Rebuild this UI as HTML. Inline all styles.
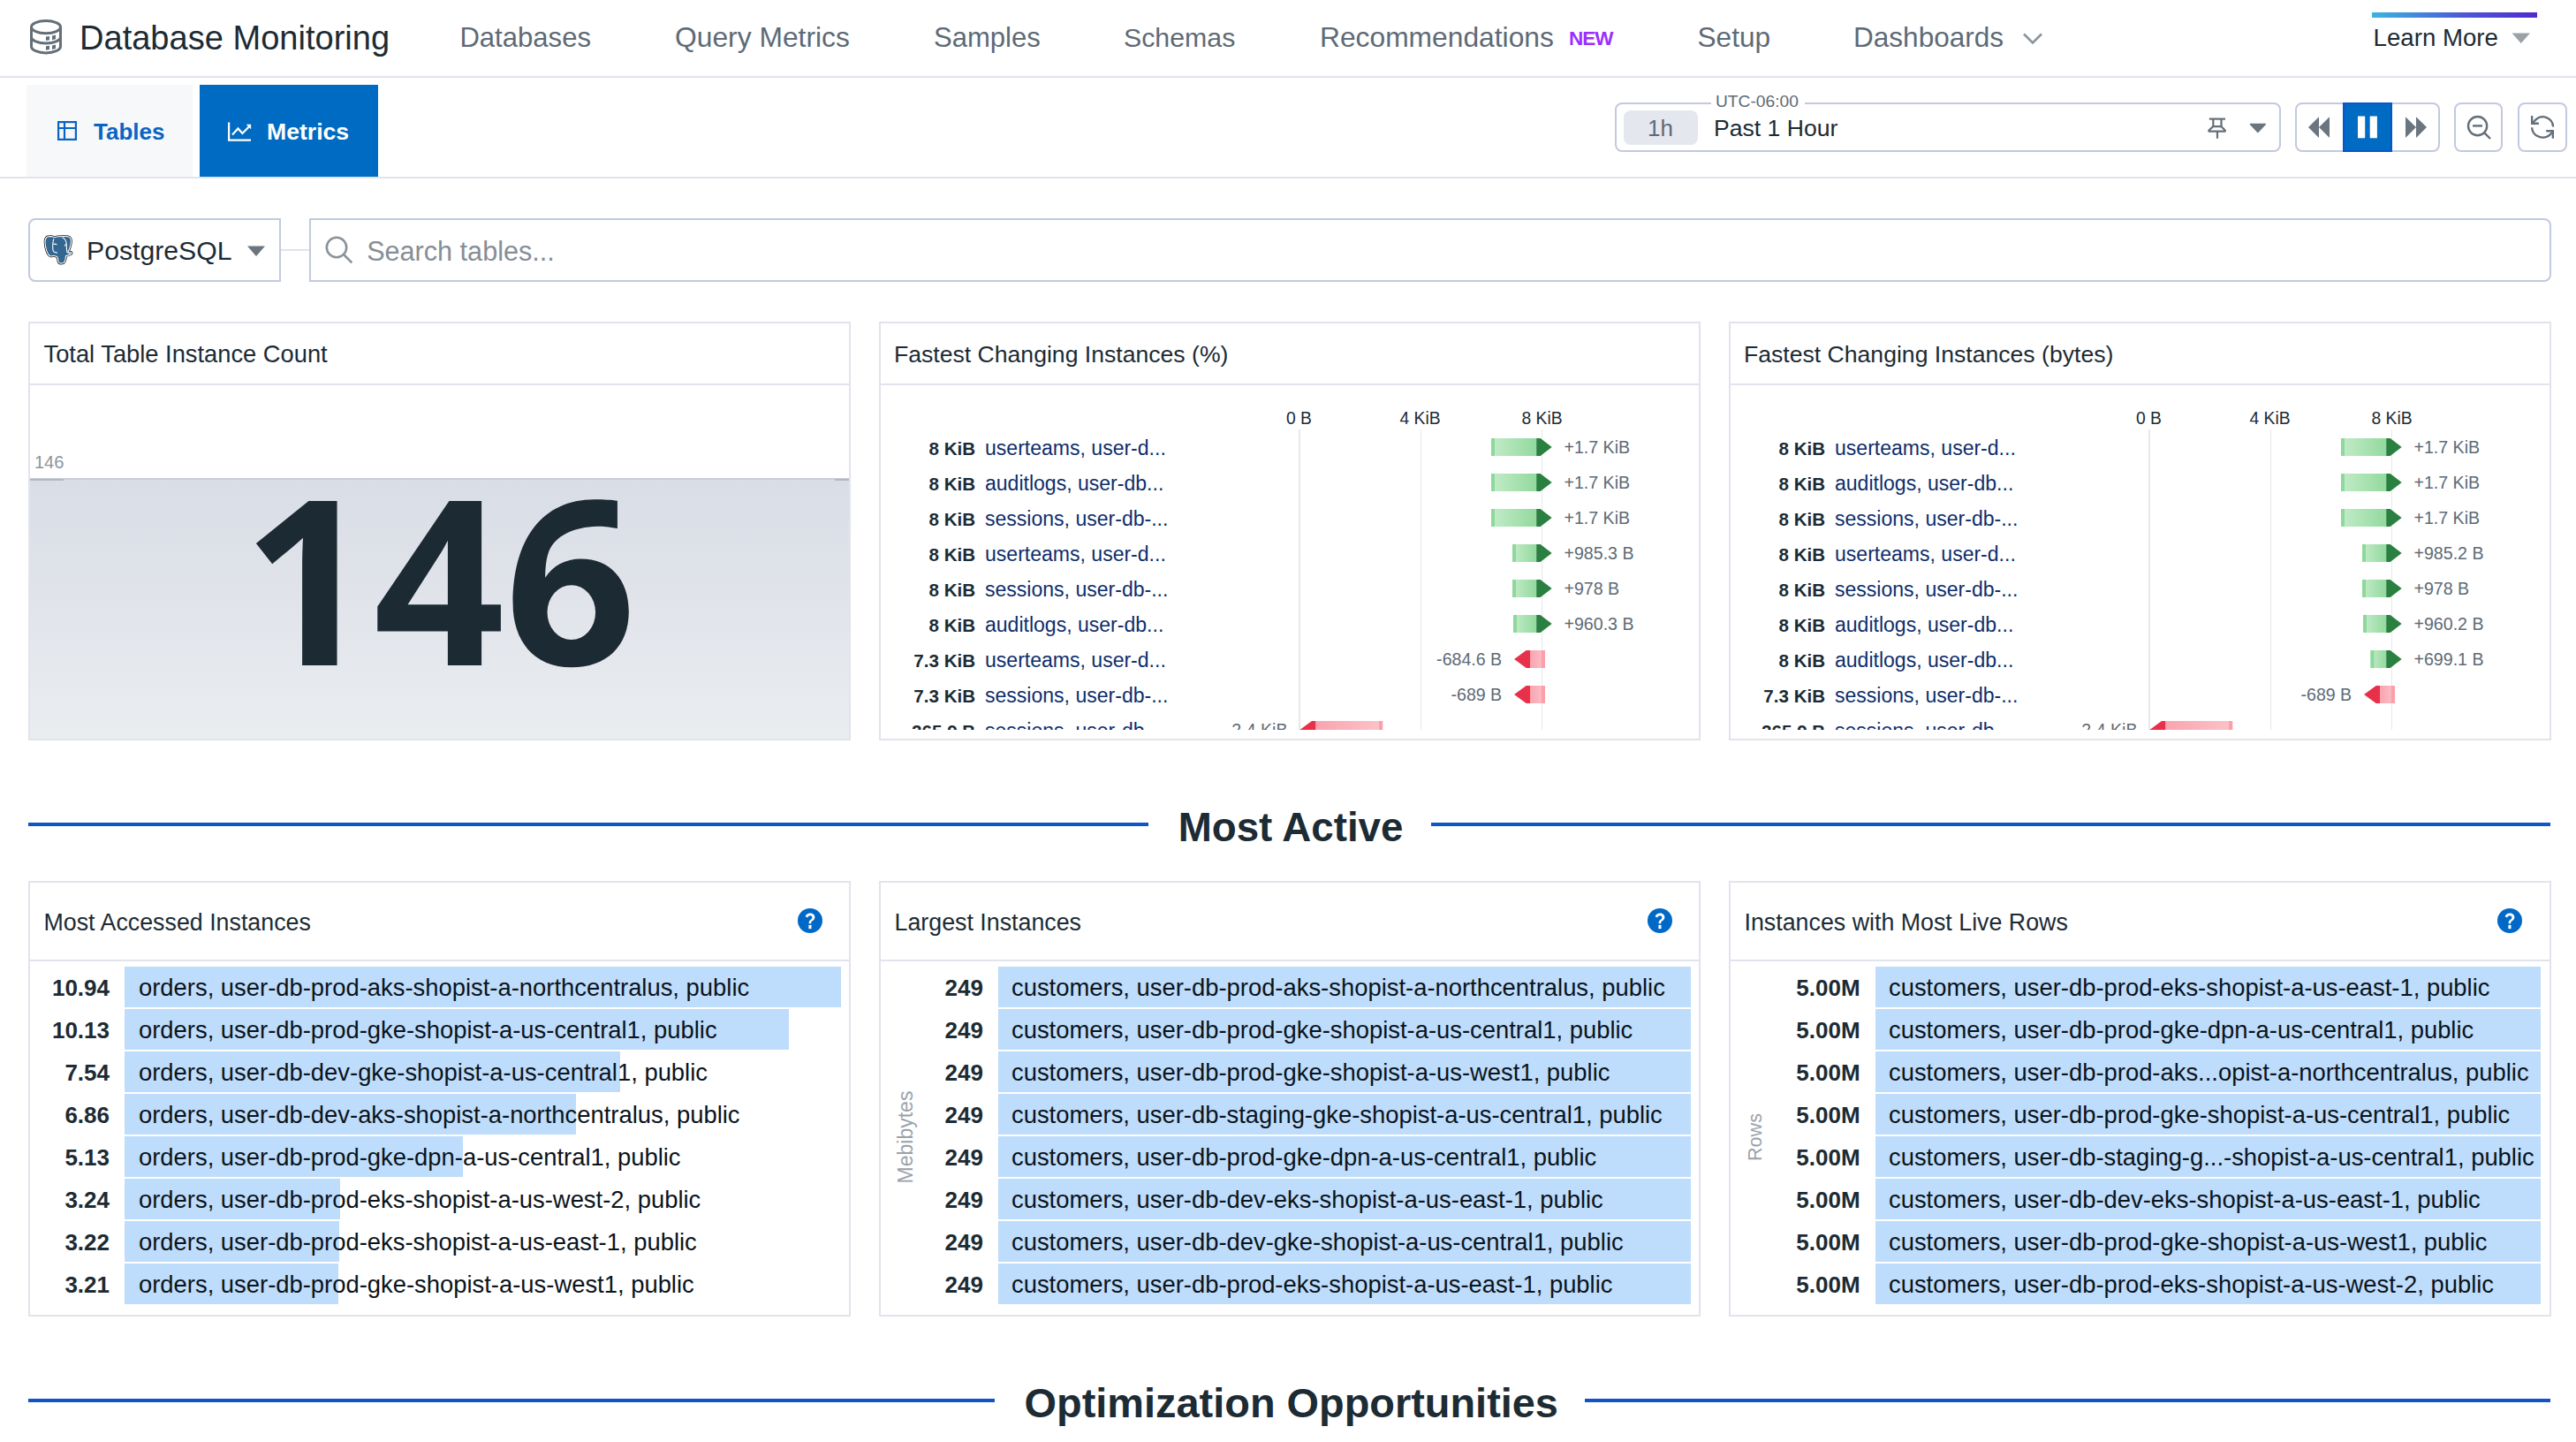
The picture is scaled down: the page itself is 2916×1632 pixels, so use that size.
<!DOCTYPE html>
<html><head><meta charset="utf-8"><title>Database Monitoring</title>
<style>
html,body{margin:0;padding:0;background:#fff;}
body{width:2916px;height:1632px;position:relative;overflow:hidden;font-family:"Liberation Sans",sans-serif;}
.t{position:absolute;line-height:1;white-space:nowrap;}
.r{position:absolute;}
</style></head><body>
<svg class="r" style="left:0;top:0" width="120" height="90" viewBox="0 0 120 90">
<g fill="none" stroke="#646f79" stroke-width="3">
<ellipse cx="52" cy="30.6" rx="16.5" ry="7.2"/>
<path d="M35.5 30.6V52.5A16.5 7.4 0 0 0 68.5 52.5V30.6"/>
<path d="M35.5 41.8A16.5 7.2 0 0 0 68.5 41.8"/>
</g>
<g fill="#646f79"><path d="M52 41.5l4-0.6v4.4l-4 0.6z"/><path d="M59 40.6l4-1v4.6l-4 1z"/>
<path d="M52 52.3l4-0.6v4.4l-4 0.6z"/><path d="M59 51.4l4-1v4.6l-4 1z"/></g>
</svg>
<div class="t" style="left:90.0px;top:24.0px;font-size:38.05px;color:#1c2b34;">Database Monitoring</div>
<div class="t" style="left:520.4px;top:27.0px;font-size:31.08px;color:#5e6a76;">Databases</div>
<div class="t" style="left:764.0px;top:27.0px;font-size:31.8px;color:#5e6a76;">Query Metrics</div>
<div class="t" style="left:1057.0px;top:27.0px;font-size:31.06px;color:#5e6a76;">Samples</div>
<div class="t" style="left:1272.0px;top:28.0px;font-size:30.3px;color:#5e6a76;">Schemas</div>
<div class="t" style="left:1494.0px;top:27.0px;font-size:31.77px;color:#5e6a76;">Recommendations</div>
<div class="t" style="left:1921.5px;top:27.0px;font-size:31.6px;color:#5e6a76;">Setup</div>
<div class="t" style="left:2098.0px;top:27.0px;font-size:31.55px;color:#5e6a76;">Dashboards</div>
<div class="t" style="left:1776.0px;top:33.0px;font-size:22.5px;font-weight:700;color:#9b30ff;letter-spacing:-1px">NEW</div>
<svg class="r" style="left:2286px;top:32px" width="30" height="22" viewBox="0 0 30 22"><path d="M5 6.5L15 16.5L25 6.5" fill="none" stroke="#8a949c" stroke-width="2.6"/></svg>
<div class="r" style="left:2685.3px;top:14.0px;width:186.7px;height:6.0px;background:linear-gradient(90deg,#3bb5df,#4c5ad6 55%,#5229cf)"></div>
<div class="t" style="left:2686.6px;top:29.0px;font-size:27.64px;color:#1c2b34;">Learn More</div>
<svg class="r" style="left:2843px;top:37px" width="22" height="13" viewBox="0 0 22 13"><path d="M0.5 0.5H21L10.75 12z" fill="#9aa1a7"/></svg>
<div class="r" style="left:0.0px;top:86.0px;width:2916.0px;height:2.0px;background:#e1e4ed"></div>
<div class="r" style="left:30.0px;top:96.0px;width:188.0px;height:104.0px;background:#f7f8fa"></div>
<div class="r" style="left:226.0px;top:96.0px;width:202.0px;height:104.0px;background:#006bc2"></div>
<svg class="r" style="left:60px;top:130px" width="32" height="34" viewBox="0 0 32 34">
<g fill="none" stroke="#0a64c2" stroke-width="2.2"><rect x="6.1" y="8.1" width="19.8" height="19.8"/><path d="M6 15H26M13 8V28"/></g></svg>
<div class="t" style="left:106.0px;top:136.0px;font-size:26px;font-weight:700;color:#0a64c2;">Tables</div>
<svg class="r" style="left:250px;top:130px" width="40" height="34" viewBox="0 0 40 34">
<g fill="none" stroke="#fff" stroke-width="2.2"><path d="M9.1 8.5V28.6H34"/><path d="M13 22.5L19.5 15.5L24.4 21L32 13.3"/></g>
<path d="M28.6 10.8H34.1V16.3z" fill="#fff"/></svg>
<div class="t" style="left:302.0px;top:136.0px;font-size:26.6px;font-weight:700;color:#fff;">Metrics</div>
<div class="r" style="left:0.0px;top:200.0px;width:2916.0px;height:2.0px;background:#e1e4ed"></div>
<div class="r" style="left:1828.0px;top:116.0px;width:753.5px;height:56.0px;border:2px solid #c3c9de;border-radius:8px;box-sizing:border-box"></div>
<div class="r" style="left:1937.0px;top:110.0px;width:106.0px;height:12.0px;background:#fff"></div>
<div class="t" style="left:1942.0px;top:105.0px;font-size:19.2px;color:#5e6a76;">UTC-06:00</div>
<div class="r" style="left:1838.0px;top:124.5px;width:84.0px;height:39.0px;background:#e4e7ee;border-radius:8px"></div>
<div class="t" style="left:1865.0px;top:132.3px;font-size:26px;color:#5e6a76;">1h</div>
<div class="t" style="left:1940.0px;top:132.3px;font-size:26.6px;color:#1c2b34;">Past 1 Hour</div>
<svg class="r" style="left:2496px;top:130px" width="28" height="30" viewBox="0 0 28 30">
<g fill="none" stroke="#646f79" stroke-width="2.2"><path d="M4.8 4.6H23"/><path d="M9.3 4.6V13.2M18.5 4.6V13.2"/><path d="M9.3 13.2H18.5L22.8 17.5V18.6H4.4V17.5Z" stroke-linejoin="round"/><path d="M14 18.6V26.8"/></g></svg>
<svg class="r" style="left:2545px;top:138px" width="22" height="14" viewBox="0 0 22 14"><path d="M2.3 2.4H19.4L10.85 11.5z" fill="#6b757e" stroke="#6b757e" stroke-width="1.4" stroke-linejoin="round"/></svg>
<div class="r" style="left:2598.0px;top:116.0px;width:163.5px;height:56.0px;border:2px solid #c3c9de;border-radius:8px;box-sizing:border-box"></div>
<div class="r" style="left:2652.0px;top:116.0px;width:56.0px;height:56.0px;background:#006bc2;border:2px solid #0a55c9;box-sizing:border-box"></div>
<svg class="r" style="left:2600px;top:120px" width="160" height="50" viewBox="2600 120 160 50">
<g fill="#6b757e"><path d="M2613 144.1L2625 132.2V156z"/><path d="M2625 144.1L2637 132.2V156z"/>
<path d="M2747 144.1L2735 132.2V156z"/><path d="M2735 144.1L2723 132.2V156z"/></g>
<g fill="#fff"><rect x="2669" y="131.5" width="8.2" height="24.8"/><rect x="2682.7" y="131.5" width="8.2" height="24.8"/></g>
</svg>
<div class="r" style="left:2778.4px;top:116.0px;width:54.8px;height:56.0px;border:2px solid #c3c9de;border-radius:8px;box-sizing:border-box"></div>
<svg class="r" style="left:2780px;top:120px" width="52" height="50" viewBox="2780 120 52 50">
<g fill="none" stroke="#646f79" stroke-width="2.4"><circle cx="2804.6" cy="142.6" r="10.6"/><path d="M2812.3 150.3L2819 157"/><path d="M2799 142.4H2810"/></g></svg>
<div class="r" style="left:2850.3px;top:116.0px;width:55.5px;height:56.0px;border:2px solid #c3c9de;border-radius:8px;box-sizing:border-box"></div>
<svg class="r" style="left:2852px;top:120px" width="52" height="50" viewBox="2852 120 52 50">
<g fill="none" stroke="#646f79" stroke-width="2.3"><path d="M2866.8,139.2L2870.2,135.6A11.7,11.7 0 0 1 2890.1,143.5"/><path d="M2866.1,144.2A12.3,11.7 0 0 0 2887,152.2L2889.8,148.8"/></g>
<g fill="#646f79"><path d="M2865,131H2867.3V138.5H2873.9V140.9H2865Z"/><path d="M2882.2,147H2891V156.8H2888.7V149.4H2882.2Z"/></g></svg>
<div class="r" style="left:32.4px;top:247.3px;width:285.2px;height:71.3px;border:2px solid #c3c9de;border-radius:8px 0 0 8px;box-sizing:border-box"></div>
<svg class="r" style="left:48px;top:264px" width="36" height="38" viewBox="0 0 36 38">

<path d="M9.7,3.5C7,3.6 5.5,3.8 5.2,4.1C3.5,5.5 2.8,8 3,10.5C3.3,14 3.8,17 4.4,18.8C5.2,21.5 6,23 7.2,24.4C8,25.5 9,26.1 9.7,26C10.5,25.9 11.2,25.6 11.9,25.5C13.5,25.7 15,26 16,26.3C16.8,26.8 17.3,27.2 17.4,28L18,32.1C18.5,33.5 19.5,34.1 20.7,34.1C22.2,34.1 23.5,33.8 24.1,33.5C25.2,32.5 25.8,31.2 26,29.9L26.6,25.5C27.8,25.2 28.9,24.9 29.9,24.6C31.2,24.2 32.3,23.6 33,23C33.2,22.3 32.9,21.5 32.4,21.3C31.3,21 30,21 29.1,21C29.6,20 30.1,19 30.5,18C31.5,15.5 32.2,13 32.4,10.5C32.6,9 32.5,7.5 32.1,6.3C31.5,5 30.5,4.2 29.3,3.8C27,3.3 25,3.4 23,3.5C21,3.6 19,3.7 17.4,3.8C16,3.9 14.8,4.2 13.5,4.4C12.2,3.9 11,3.5 9.7,3.5Z" fill="#000" stroke="#111" stroke-width="2.6"/>
<path d="M9.7,3.5C7,3.6 5.5,3.8 5.2,4.1C3.5,5.5 2.8,8 3,10.5C3.3,14 3.8,17 4.4,18.8C5.2,21.5 6,23 7.2,24.4C8,25.5 9,26.1 9.7,26C10.5,25.9 11.2,25.6 11.9,25.5C13.5,25.7 15,26 16,26.3C16.8,26.8 17.3,27.2 17.4,28L18,32.1C18.5,33.5 19.5,34.1 20.7,34.1C22.2,34.1 23.5,33.8 24.1,33.5C25.2,32.5 25.8,31.2 26,29.9L26.6,25.5C27.8,25.2 28.9,24.9 29.9,24.6C31.2,24.2 32.3,23.6 33,23C33.2,22.3 32.9,21.5 32.4,21.3C31.3,21 30,21 29.1,21C29.6,20 30.1,19 30.5,18C31.5,15.5 32.2,13 32.4,10.5C32.6,9 32.5,7.5 32.1,6.3C31.5,5 30.5,4.2 29.3,3.8C27,3.3 25,3.4 23,3.5C21,3.6 19,3.7 17.4,3.8C16,3.9 14.8,4.2 13.5,4.4C12.2,3.9 11,3.5 9.7,3.5Z" fill="#336791" stroke="#fff" stroke-width="1.1"/>
<g fill="none" stroke="#fff" stroke-width="1.1"><path d="M13,6.3C11.8,9 11.4,13 11.9,18.8C12.3,20.3 12.8,21 13.5,21.3C14.5,21.8 15.8,22 16.9,22.1"/><path d="M22.4,4.7C24,5.3 25.2,6.2 25.7,7.2C26.6,8.6 27,10 27.1,11.3C27.4,13.5 27.4,15.5 27.4,17.4C27.5,19 27.7,20.5 28,21.6C29,22.2 30.2,22.4 31.3,22.4"/><path d="M12.2,12.2C13.5,12 15,12 16.4,12.8"/><path d="M25.2,14.5C25.6,13.5 26.2,12.8 27,12.5"/></g></svg>
<div class="t" style="left:98.0px;top:268.7px;font-size:30.2px;color:#1c2b34;">PostgreSQL</div>
<svg class="r" style="left:279px;top:277px" width="23" height="15" viewBox="0 0 23 15"><path d="M1 1.4H21L11 13z" fill="#6b757e"/></svg>
<div class="r" style="left:317.6px;top:282.0px;width:32.7px;height:2.0px;background:#dfe3eb"></div>
<div class="r" style="left:350.3px;top:247.3px;width:2537.5px;height:71.3px;border:2px solid #c3c9de;border-radius:0 8px 8px 0;box-sizing:border-box"></div>
<svg class="r" style="left:364px;top:264px" width="40" height="40" viewBox="0 0 40 40">
<g fill="none" stroke="#8a939b" stroke-width="2.6"><circle cx="17" cy="16" r="11.2"/><path d="M25 24L34.3 33.3"/></g></svg>
<div class="t" style="left:415.2px;top:268.8px;font-size:30.6px;color:#868e96;">Search tables...</div>
<div class="r" style="left:32.0px;top:364.0px;width:931.0px;height:474.0px;border:2px solid #e1e4ec;box-sizing:border-box;background:#fff"></div>
<div class="r" style="left:32.0px;top:433.5px;width:931.0px;height:2.0px;background:#e1e4ec"></div>
<div class="t" style="left:49.5px;top:386.8px;font-size:27.3px;color:#1c2b34;">Total Table Instance Count</div>
<div class="t" style="left:38.9px;top:512.7px;font-size:20.1px;color:#8d959c;">146</div>
<div class="r" style="left:34.0px;top:540.5px;width:927.0px;height:295.5px;background:linear-gradient(180deg,#d9dde6 0%,#e1e4ea 50%,#eaedf0 100%)"></div>
<div class="r" style="left:34.0px;top:540.5px;width:927.0px;height:2.5px;background:#c9ced8"></div>
<div class="r" style="left:34.0px;top:541.5px;width:38.0px;height:2.5px;background:#b3b8c3"></div>
<div class="r" style="left:945.0px;top:541.5px;width:16.0px;height:2.5px;background:#b3b8c3"></div>
<svg class="r" style="left:0;top:0" width="963" height="838" viewBox="0 0 963 838"><g fill="#1c2a33" fill-rule="evenodd">
<path d="M349.4,567.1H381.5V753H342.1V641.6C342.1,630 342.5,618 343,608.8C335,616 326,624 318,630L308.2,638.2L289.9,614.9Z"/>
<path d="M508.4,567.1H545.1V684.3H566.9V714.4H545.1V753H506.9V714.4H427.3V686.6ZM506.9,611.8C504.5,616 502.5,620.5 499.7,624.8L461.6,684.3H506.9Z"/>
<path d="M698.9,566.8L698.9,598.1C688,596.5 684,595.8 676,595.8C650,596.5 628,606 621,625C618,633 617.2,645 617.2,653.8C626,640 640,632.4 657.7,632.4C690,632.4 711.8,655 711.8,692C711.8,732 686,755.3 647,755.3C604,755.3 580.6,725 580.6,683C580.6,610 614,565.3 672.9,565.3C684,565.3 692,565.8 698.9,566.8ZM619.5,693.1A27.3,30.9 0 1 0 674.1,693.1A27.3,30.9 0 1 0 619.5,693.1Z"/>
</g></svg>
<div class="r" style="left:995.0px;top:364.0px;width:930.0px;height:474.0px;border:2px solid #e1e4ec;box-sizing:border-box;background:#fff"></div>
<div class="r" style="left:995.0px;top:433.5px;width:930.0px;height:2.0px;background:#e1e4ec"></div>
<div class="t" style="left:1012.0px;top:387.8px;font-size:26.6px;color:#1c2b34;">Fastest Changing Instances (%)</div>
<div class="r" style="left:997px;top:436px;width:927px;height:390px;overflow:hidden">
<div class="t" style="left:459.0px;top:27.7px;font-size:19.3px;color:#1c2b34;">0 B</div>
<div class="t" style="left:587.5px;top:27.7px;font-size:19.3px;color:#1c2b34;">4 KiB</div>
<div class="t" style="left:725.5px;top:27.7px;font-size:19.3px;color:#1c2b34;">8 KiB</div>
<div class="r" style="left:473.2px;top:50.0px;width:1.6px;height:850.0px;background:#e6e8ec"></div>
<div class="r" style="left:610.6px;top:50.0px;width:1.6px;height:850.0px;background:#e6e8ec"></div>
<div class="r" style="left:747.8px;top:50.0px;width:1.6px;height:850.0px;background:#e6e8ec"></div>
<div class="t" style="left:0;width:107.2px;text-align:right;top:61.8px;font-size:20.6px;font-weight:700;color:#1c2b34">8 KiB</div>
<div class="t" style="left:118.0px;top:59.8px;font-size:23.04px;color:#0e2e6b;">userteams, user-d...</div>
<div class="t" style="left:773.5px;top:61.0px;font-size:19.6px;color:#5e6a76;">+1.7 KiB</div>
<div class="t" style="left:0;width:107.2px;text-align:right;top:101.8px;font-size:20.6px;font-weight:700;color:#1c2b34">8 KiB</div>
<div class="t" style="left:118.0px;top:99.8px;font-size:23.04px;color:#0e2e6b;">auditlogs, user-db...</div>
<div class="t" style="left:773.5px;top:101.0px;font-size:19.6px;color:#5e6a76;">+1.7 KiB</div>
<div class="t" style="left:0;width:107.2px;text-align:right;top:141.8px;font-size:20.6px;font-weight:700;color:#1c2b34">8 KiB</div>
<div class="t" style="left:118.0px;top:139.8px;font-size:23.04px;color:#0e2e6b;">sessions, user-db-...</div>
<div class="t" style="left:773.5px;top:141.0px;font-size:19.6px;color:#5e6a76;">+1.7 KiB</div>
<div class="t" style="left:0;width:107.2px;text-align:right;top:181.8px;font-size:20.6px;font-weight:700;color:#1c2b34">8 KiB</div>
<div class="t" style="left:118.0px;top:179.8px;font-size:23.04px;color:#0e2e6b;">userteams, user-d...</div>
<div class="t" style="left:773.5px;top:181.0px;font-size:19.6px;color:#5e6a76;">+985.3 B</div>
<div class="t" style="left:0;width:107.2px;text-align:right;top:221.8px;font-size:20.6px;font-weight:700;color:#1c2b34">8 KiB</div>
<div class="t" style="left:118.0px;top:219.8px;font-size:23.04px;color:#0e2e6b;">sessions, user-db-...</div>
<div class="t" style="left:773.5px;top:221.0px;font-size:19.6px;color:#5e6a76;">+978 B</div>
<div class="t" style="left:0;width:107.2px;text-align:right;top:261.8px;font-size:20.6px;font-weight:700;color:#1c2b34">8 KiB</div>
<div class="t" style="left:118.0px;top:259.8px;font-size:23.04px;color:#0e2e6b;">auditlogs, user-db...</div>
<div class="t" style="left:773.5px;top:261.0px;font-size:19.6px;color:#5e6a76;">+960.3 B</div>
<div class="t" style="left:0;width:107.2px;text-align:right;top:301.8px;font-size:20.6px;font-weight:700;color:#1c2b34">7.3 KiB</div>
<div class="t" style="left:118.0px;top:299.8px;font-size:23.04px;color:#0e2e6b;">userteams, user-d...</div>
<div class="t" style="left:0;width:703.2px;text-align:right;top:301.0px;font-size:19.6px;color:#5e6a76">-684.6 B</div>
<div class="t" style="left:0;width:107.2px;text-align:right;top:341.8px;font-size:20.6px;font-weight:700;color:#1c2b34">7.3 KiB</div>
<div class="t" style="left:118.0px;top:339.8px;font-size:23.04px;color:#0e2e6b;">sessions, user-db-...</div>
<div class="t" style="left:0;width:703.2px;text-align:right;top:341.0px;font-size:19.6px;color:#5e6a76">-689 B</div>
<div class="t" style="left:0;width:107.2px;text-align:right;top:381.8px;font-size:20.6px;font-weight:700;color:#1c2b34">265.9 B</div>
<div class="t" style="left:118.0px;top:379.8px;font-size:23.04px;color:#0e2e6b;">sessions, user-db...</div>
<div class="t" style="left:0;width:460.5px;text-align:right;top:381.0px;font-size:19.6px;color:#5e6a76">-2.4 KiB</div>
<svg class="r" style="left:0;top:0" width="927" height="390" viewBox="997 436 927 390">
<defs><linearGradient id="gg" x1="0" x2="1"><stop offset="0" stop-color="#c3ecc9"/><stop offset="1" stop-color="#93d99e"/></linearGradient>
<linearGradient id="rg" x1="0" x2="1"><stop offset="0" stop-color="#f9a4af"/><stop offset="1" stop-color="#fbc3ca"/></linearGradient></defs>
<rect x="1688" y="496" width="51.200000000000045" height="20" fill="url(#gg)"/>
<rect x="1688" y="496" width="4" height="20" fill="#8fd89c"/>
<path d="M1739.2 496H1743.7L1756.7 506L1743.7 516H1739.2z" fill="#2a8040"/>
<rect x="1688" y="536" width="51.200000000000045" height="20" fill="url(#gg)"/>
<rect x="1688" y="536" width="4" height="20" fill="#8fd89c"/>
<path d="M1739.2 536H1743.7L1756.7 546L1743.7 556H1739.2z" fill="#2a8040"/>
<rect x="1688" y="576" width="51.200000000000045" height="20" fill="url(#gg)"/>
<rect x="1688" y="576" width="4" height="20" fill="#8fd89c"/>
<path d="M1739.2 576H1743.7L1756.7 586L1743.7 596H1739.2z" fill="#2a8040"/>
<rect x="1712" y="616" width="27.200000000000045" height="20" fill="url(#gg)"/>
<rect x="1712" y="616" width="4" height="20" fill="#8fd89c"/>
<path d="M1739.2 616H1743.7L1756.7 626L1743.7 636H1739.2z" fill="#2a8040"/>
<rect x="1712" y="656" width="27.200000000000045" height="20" fill="url(#gg)"/>
<rect x="1712" y="656" width="4" height="20" fill="#8fd89c"/>
<path d="M1739.2 656H1743.7L1756.7 666L1743.7 676H1739.2z" fill="#2a8040"/>
<rect x="1713" y="696" width="26.200000000000045" height="20" fill="url(#gg)"/>
<rect x="1713" y="696" width="4" height="20" fill="#8fd89c"/>
<path d="M1739.2 696H1743.7L1756.7 706L1743.7 716H1739.2z" fill="#2a8040"/>
<rect x="1732" y="736" width="17" height="20" fill="url(#rg)"/>
<rect x="1744.8" y="736" width="4.2" height="20" fill="#fb9fab"/>
<path d="M1714 746L1727.7 736H1732V756H1727.7z" fill="#e8304a"/>
<rect x="1732" y="776" width="17" height="20" fill="url(#rg)"/>
<rect x="1744.8" y="776" width="4.2" height="20" fill="#fb9fab"/>
<path d="M1714 786L1727.7 776H1732V796H1727.7z" fill="#e8304a"/>
<rect x="1489.3" y="816" width="75.90000000000009" height="20" fill="url(#rg)"/>
<rect x="1561.0" y="816" width="4.2" height="20" fill="#fb9fab"/>
<path d="M1471.3 826L1485.0 816H1489.3V836H1485.0z" fill="#e8304a"/>
</svg>
</div>
<div class="r" style="left:1957.0px;top:364.0px;width:931.0px;height:474.0px;border:2px solid #e1e4ec;box-sizing:border-box;background:#fff"></div>
<div class="r" style="left:1957.0px;top:433.5px;width:931.0px;height:2.0px;background:#e1e4ec"></div>
<div class="t" style="left:1974.0px;top:387.8px;font-size:26.6px;color:#1c2b34;">Fastest Changing Instances (bytes)</div>
<div class="r" style="left:1959px;top:436px;width:927px;height:390px;overflow:hidden">
<div class="t" style="left:459.0px;top:27.7px;font-size:19.3px;color:#1c2b34;">0 B</div>
<div class="t" style="left:587.5px;top:27.7px;font-size:19.3px;color:#1c2b34;">4 KiB</div>
<div class="t" style="left:725.5px;top:27.7px;font-size:19.3px;color:#1c2b34;">8 KiB</div>
<div class="r" style="left:473.2px;top:50.0px;width:1.6px;height:850.0px;background:#e6e8ec"></div>
<div class="r" style="left:610.6px;top:50.0px;width:1.6px;height:850.0px;background:#e6e8ec"></div>
<div class="r" style="left:747.8px;top:50.0px;width:1.6px;height:850.0px;background:#e6e8ec"></div>
<div class="t" style="left:0;width:107.2px;text-align:right;top:61.8px;font-size:20.6px;font-weight:700;color:#1c2b34">8 KiB</div>
<div class="t" style="left:118.0px;top:59.8px;font-size:23.04px;color:#0e2e6b;">userteams, user-d...</div>
<div class="t" style="left:773.5px;top:61.0px;font-size:19.6px;color:#5e6a76;">+1.7 KiB</div>
<div class="t" style="left:0;width:107.2px;text-align:right;top:101.8px;font-size:20.6px;font-weight:700;color:#1c2b34">8 KiB</div>
<div class="t" style="left:118.0px;top:99.8px;font-size:23.04px;color:#0e2e6b;">auditlogs, user-db...</div>
<div class="t" style="left:773.5px;top:101.0px;font-size:19.6px;color:#5e6a76;">+1.7 KiB</div>
<div class="t" style="left:0;width:107.2px;text-align:right;top:141.8px;font-size:20.6px;font-weight:700;color:#1c2b34">8 KiB</div>
<div class="t" style="left:118.0px;top:139.8px;font-size:23.04px;color:#0e2e6b;">sessions, user-db-...</div>
<div class="t" style="left:773.5px;top:141.0px;font-size:19.6px;color:#5e6a76;">+1.7 KiB</div>
<div class="t" style="left:0;width:107.2px;text-align:right;top:181.8px;font-size:20.6px;font-weight:700;color:#1c2b34">8 KiB</div>
<div class="t" style="left:118.0px;top:179.8px;font-size:23.04px;color:#0e2e6b;">userteams, user-d...</div>
<div class="t" style="left:773.5px;top:181.0px;font-size:19.6px;color:#5e6a76;">+985.2 B</div>
<div class="t" style="left:0;width:107.2px;text-align:right;top:221.8px;font-size:20.6px;font-weight:700;color:#1c2b34">8 KiB</div>
<div class="t" style="left:118.0px;top:219.8px;font-size:23.04px;color:#0e2e6b;">sessions, user-db-...</div>
<div class="t" style="left:773.5px;top:221.0px;font-size:19.6px;color:#5e6a76;">+978 B</div>
<div class="t" style="left:0;width:107.2px;text-align:right;top:261.8px;font-size:20.6px;font-weight:700;color:#1c2b34">8 KiB</div>
<div class="t" style="left:118.0px;top:259.8px;font-size:23.04px;color:#0e2e6b;">auditlogs, user-db...</div>
<div class="t" style="left:773.5px;top:261.0px;font-size:19.6px;color:#5e6a76;">+960.2 B</div>
<div class="t" style="left:0;width:107.2px;text-align:right;top:301.8px;font-size:20.6px;font-weight:700;color:#1c2b34">8 KiB</div>
<div class="t" style="left:118.0px;top:299.8px;font-size:23.04px;color:#0e2e6b;">auditlogs, user-db...</div>
<div class="t" style="left:773.5px;top:301.0px;font-size:19.6px;color:#5e6a76;">+699.1 B</div>
<div class="t" style="left:0;width:107.2px;text-align:right;top:341.8px;font-size:20.6px;font-weight:700;color:#1c2b34">7.3 KiB</div>
<div class="t" style="left:118.0px;top:339.8px;font-size:23.04px;color:#0e2e6b;">sessions, user-db-...</div>
<div class="t" style="left:0;width:703.2px;text-align:right;top:341.0px;font-size:19.6px;color:#5e6a76">-689 B</div>
<div class="t" style="left:0;width:107.2px;text-align:right;top:381.8px;font-size:20.6px;font-weight:700;color:#1c2b34">265.9 B</div>
<div class="t" style="left:118.0px;top:379.8px;font-size:23.04px;color:#0e2e6b;">sessions, user-db...</div>
<div class="t" style="left:0;width:460.5px;text-align:right;top:381.0px;font-size:19.6px;color:#5e6a76">-2.4 KiB</div>
<svg class="r" style="left:0;top:0" width="927" height="390" viewBox="1959 436 927 390">
<defs><linearGradient id="gg" x1="0" x2="1"><stop offset="0" stop-color="#c3ecc9"/><stop offset="1" stop-color="#93d99e"/></linearGradient>
<linearGradient id="rg" x1="0" x2="1"><stop offset="0" stop-color="#f9a4af"/><stop offset="1" stop-color="#fbc3ca"/></linearGradient></defs>
<rect x="2650" y="496" width="51.19999999999982" height="20" fill="url(#gg)"/>
<rect x="2650" y="496" width="4" height="20" fill="#8fd89c"/>
<path d="M2701.2 496H2705.7L2718.7 506L2705.7 516H2701.2z" fill="#2a8040"/>
<rect x="2650" y="536" width="51.19999999999982" height="20" fill="url(#gg)"/>
<rect x="2650" y="536" width="4" height="20" fill="#8fd89c"/>
<path d="M2701.2 536H2705.7L2718.7 546L2705.7 556H2701.2z" fill="#2a8040"/>
<rect x="2650" y="576" width="51.19999999999982" height="20" fill="url(#gg)"/>
<rect x="2650" y="576" width="4" height="20" fill="#8fd89c"/>
<path d="M2701.2 576H2705.7L2718.7 586L2705.7 596H2701.2z" fill="#2a8040"/>
<rect x="2674" y="616" width="27.199999999999818" height="20" fill="url(#gg)"/>
<rect x="2674" y="616" width="4" height="20" fill="#8fd89c"/>
<path d="M2701.2 616H2705.7L2718.7 626L2705.7 636H2701.2z" fill="#2a8040"/>
<rect x="2674" y="656" width="27.199999999999818" height="20" fill="url(#gg)"/>
<rect x="2674" y="656" width="4" height="20" fill="#8fd89c"/>
<path d="M2701.2 656H2705.7L2718.7 666L2705.7 676H2701.2z" fill="#2a8040"/>
<rect x="2675" y="696" width="26.199999999999818" height="20" fill="url(#gg)"/>
<rect x="2675" y="696" width="4" height="20" fill="#8fd89c"/>
<path d="M2701.2 696H2705.7L2718.7 706L2705.7 716H2701.2z" fill="#2a8040"/>
<rect x="2683.4" y="736" width="17.799999999999727" height="20" fill="url(#gg)"/>
<rect x="2683.4" y="736" width="4" height="20" fill="#8fd89c"/>
<path d="M2701.2 736H2705.7L2718.7 746L2705.7 756H2701.2z" fill="#2a8040"/>
<rect x="2694" y="776" width="17" height="20" fill="url(#rg)"/>
<rect x="2706.8" y="776" width="4.2" height="20" fill="#fb9fab"/>
<path d="M2676 786L2689.7 776H2694V796H2689.7z" fill="#e8304a"/>
<rect x="2451.3" y="816" width="75.89999999999964" height="20" fill="url(#rg)"/>
<rect x="2523.0" y="816" width="4.2" height="20" fill="#fb9fab"/>
<path d="M2433.3 826L2447.0 816H2451.3V836H2447.0z" fill="#e8304a"/>
</svg>
</div>
<div class="r" style="left:32.0px;top:931.0px;width:1267.7px;height:4.0px;background:#0f55c5"></div>
<div class="r" style="left:1619.8px;top:931.0px;width:1267.7px;height:4.0px;background:#0f55c5"></div>
<div class="t" style="left:1333.7px;top:914.0px;font-size:45.7px;font-weight:700;color:#1c2b34;">Most Active</div>
<div class="r" style="left:32.0px;top:1583.0px;width:1093.6px;height:4.0px;background:#0f55c5"></div>
<div class="r" style="left:1794.3px;top:1583.0px;width:1093.2px;height:4.0px;background:#0f55c5"></div>
<div class="t" style="left:1159.6px;top:1564.7px;font-size:46.9px;font-weight:700;color:#1c2b34;">Optimization Opportunities</div>
<div class="r" style="left:32.0px;top:997.0px;width:931.0px;height:493.0px;border:2px solid #e1e4ec;box-sizing:border-box;background:#fff"></div>
<div class="r" style="left:32.0px;top:1086.0px;width:931.0px;height:2.0px;background:#e1e4ec"></div>
<div class="t" style="left:49.5px;top:1030.5px;font-size:26.8px;color:#1c2b34;">Most Accessed Instances</div>
<svg class="r" style="left:901px;top:1026px" width="32" height="32" viewBox="0 0 32 32"><circle cx="16" cy="16" r="14" fill="#0068c6"/><path d="M10.6 11.3C11.6 8.8 13.6 7.6 16 7.6C19 7.6 21.4 9.5 21.4 12.2C21.4 14.6 19.4 15.6 18.2 16.6C17.4 17.3 17.2 17.9 17.2 19.2H14.6C14.6 17.3 15 16.3 16.4 15.1C17.6 14.1 18.4 13.6 18.4 12.4C18.4 11.1 17.4 10.3 16 10.3C14.8 10.3 13.9 11 13.2 12.5Z" fill="#fff"/><rect x="14.4" y="20.9" width="3.1" height="4.3" fill="#fff"/></svg>
<div class="r" style="left:141.0px;top:1094.0px;width:811.0px;height:46.0px;background:#bedcfb"></div>
<div class="t" style="left:32px;width:92.0px;text-align:right;top:1105.2px;font-size:26px;font-weight:700;color:#1c2b34">10.94</div>
<div class="t" style="left:157.0px;top:1104.2px;font-size:27.4px;color:#0b141b;white-space:nowrap">orders, user-db-prod-aks-shopist-a-northcentralus, public</div>
<div class="r" style="left:141.0px;top:1142.0px;width:752.0px;height:46.0px;background:#bedcfb"></div>
<div class="t" style="left:32px;width:92.0px;text-align:right;top:1153.2px;font-size:26px;font-weight:700;color:#1c2b34">10.13</div>
<div class="t" style="left:157.0px;top:1152.2px;font-size:27.4px;color:#0b141b;white-space:nowrap">orders, user-db-prod-gke-shopist-a-us-central1, public</div>
<div class="r" style="left:141.0px;top:1190.0px;width:561.0px;height:46.0px;background:#bedcfb"></div>
<div class="t" style="left:32px;width:92.0px;text-align:right;top:1201.2px;font-size:26px;font-weight:700;color:#1c2b34">7.54</div>
<div class="t" style="left:157.0px;top:1200.2px;font-size:27.4px;color:#0b141b;white-space:nowrap">orders, user-db-dev-gke-shopist-a-us-central1, public</div>
<div class="r" style="left:141.0px;top:1238.0px;width:511.0px;height:46.0px;background:#bedcfb"></div>
<div class="t" style="left:32px;width:92.0px;text-align:right;top:1249.2px;font-size:26px;font-weight:700;color:#1c2b34">6.86</div>
<div class="t" style="left:157.0px;top:1248.2px;font-size:27.4px;color:#0b141b;white-space:nowrap">orders, user-db-dev-aks-shopist-a-northcentralus, public</div>
<div class="r" style="left:141.0px;top:1286.0px;width:383.0px;height:46.0px;background:#bedcfb"></div>
<div class="t" style="left:32px;width:92.0px;text-align:right;top:1297.2px;font-size:26px;font-weight:700;color:#1c2b34">5.13</div>
<div class="t" style="left:157.0px;top:1296.2px;font-size:27.4px;color:#0b141b;white-space:nowrap">orders, user-db-prod-gke-dpn-a-us-central1, public</div>
<div class="r" style="left:141.0px;top:1334.0px;width:244.0px;height:46.0px;background:#bedcfb"></div>
<div class="t" style="left:32px;width:92.0px;text-align:right;top:1345.2px;font-size:26px;font-weight:700;color:#1c2b34">3.24</div>
<div class="t" style="left:157.0px;top:1344.2px;font-size:27.4px;color:#0b141b;white-space:nowrap">orders, user-db-prod-eks-shopist-a-us-west-2, public</div>
<div class="r" style="left:141.0px;top:1382.0px;width:242.5px;height:46.0px;background:#bedcfb"></div>
<div class="t" style="left:32px;width:92.0px;text-align:right;top:1393.2px;font-size:26px;font-weight:700;color:#1c2b34">3.22</div>
<div class="t" style="left:157.0px;top:1392.2px;font-size:27.4px;color:#0b141b;white-space:nowrap">orders, user-db-prod-eks-shopist-a-us-east-1, public</div>
<div class="r" style="left:141.0px;top:1430.0px;width:241.8px;height:46.0px;background:#bedcfb"></div>
<div class="t" style="left:32px;width:92.0px;text-align:right;top:1441.2px;font-size:26px;font-weight:700;color:#1c2b34">3.21</div>
<div class="t" style="left:157.0px;top:1440.2px;font-size:27.4px;color:#0b141b;white-space:nowrap">orders, user-db-prod-gke-shopist-a-us-west1, public</div>
<div class="r" style="left:995.0px;top:997.0px;width:930.0px;height:493.0px;border:2px solid #e1e4ec;box-sizing:border-box;background:#fff"></div>
<div class="r" style="left:995.0px;top:1086.0px;width:930.0px;height:2.0px;background:#e1e4ec"></div>
<div class="t" style="left:1012.5px;top:1030.5px;font-size:26.8px;color:#1c2b34;">Largest Instances</div>
<svg class="r" style="left:1863px;top:1026px" width="32" height="32" viewBox="0 0 32 32"><circle cx="16" cy="16" r="14" fill="#0068c6"/><path d="M10.6 11.3C11.6 8.8 13.6 7.6 16 7.6C19 7.6 21.4 9.5 21.4 12.2C21.4 14.6 19.4 15.6 18.2 16.6C17.4 17.3 17.2 17.9 17.2 19.2H14.6C14.6 17.3 15 16.3 16.4 15.1C17.6 14.1 18.4 13.6 18.4 12.4C18.4 11.1 17.4 10.3 16 10.3C14.8 10.3 13.9 11 13.2 12.5Z" fill="#fff"/><rect x="14.4" y="20.9" width="3.1" height="4.3" fill="#fff"/></svg>
<div class="r" style="left:1130.0px;top:1094.0px;width:784.3px;height:46.0px;background:#bedcfb"></div>
<div class="t" style="left:995px;width:118.0px;text-align:right;top:1105.2px;font-size:26px;font-weight:700;color:#1c2b34">249</div>
<div class="t" style="left:1145.0px;top:1104.2px;font-size:27.4px;color:#0b141b;white-space:nowrap">customers, user-db-prod-aks-shopist-a-northcentralus, public</div>
<div class="r" style="left:1130.0px;top:1142.0px;width:784.3px;height:46.0px;background:#bedcfb"></div>
<div class="t" style="left:995px;width:118.0px;text-align:right;top:1153.2px;font-size:26px;font-weight:700;color:#1c2b34">249</div>
<div class="t" style="left:1145.0px;top:1152.2px;font-size:27.4px;color:#0b141b;white-space:nowrap">customers, user-db-prod-gke-shopist-a-us-central1, public</div>
<div class="r" style="left:1130.0px;top:1190.0px;width:784.3px;height:46.0px;background:#bedcfb"></div>
<div class="t" style="left:995px;width:118.0px;text-align:right;top:1201.2px;font-size:26px;font-weight:700;color:#1c2b34">249</div>
<div class="t" style="left:1145.0px;top:1200.2px;font-size:27.4px;color:#0b141b;white-space:nowrap">customers, user-db-prod-gke-shopist-a-us-west1, public</div>
<div class="r" style="left:1130.0px;top:1238.0px;width:784.3px;height:46.0px;background:#bedcfb"></div>
<div class="t" style="left:995px;width:118.0px;text-align:right;top:1249.2px;font-size:26px;font-weight:700;color:#1c2b34">249</div>
<div class="t" style="left:1145.0px;top:1248.2px;font-size:27.4px;color:#0b141b;white-space:nowrap">customers, user-db-staging-gke-shopist-a-us-central1, public</div>
<div class="r" style="left:1130.0px;top:1286.0px;width:784.3px;height:46.0px;background:#bedcfb"></div>
<div class="t" style="left:995px;width:118.0px;text-align:right;top:1297.2px;font-size:26px;font-weight:700;color:#1c2b34">249</div>
<div class="t" style="left:1145.0px;top:1296.2px;font-size:27.4px;color:#0b141b;white-space:nowrap">customers, user-db-prod-gke-dpn-a-us-central1, public</div>
<div class="r" style="left:1130.0px;top:1334.0px;width:784.3px;height:46.0px;background:#bedcfb"></div>
<div class="t" style="left:995px;width:118.0px;text-align:right;top:1345.2px;font-size:26px;font-weight:700;color:#1c2b34">249</div>
<div class="t" style="left:1145.0px;top:1344.2px;font-size:27.4px;color:#0b141b;white-space:nowrap">customers, user-db-dev-eks-shopist-a-us-east-1, public</div>
<div class="r" style="left:1130.0px;top:1382.0px;width:784.3px;height:46.0px;background:#bedcfb"></div>
<div class="t" style="left:995px;width:118.0px;text-align:right;top:1393.2px;font-size:26px;font-weight:700;color:#1c2b34">249</div>
<div class="t" style="left:1145.0px;top:1392.2px;font-size:27.4px;color:#0b141b;white-space:nowrap">customers, user-db-dev-gke-shopist-a-us-central1, public</div>
<div class="r" style="left:1130.0px;top:1430.0px;width:784.3px;height:46.0px;background:#bedcfb"></div>
<div class="t" style="left:995px;width:118.0px;text-align:right;top:1441.2px;font-size:26px;font-weight:700;color:#1c2b34">249</div>
<div class="t" style="left:1145.0px;top:1440.2px;font-size:27.4px;color:#0b141b;white-space:nowrap">customers, user-db-prod-eks-shopist-a-us-east-1, public</div>
<div class="t" style="left:1024.5px;top:1287.4px;font-size:23px;color:#9aa2a9;transform:translate(-50%,-50%) rotate(-90deg);white-space:nowrap;line-height:1">Mebibytes</div>
<div class="r" style="left:1957.0px;top:997.0px;width:931.0px;height:493.0px;border:2px solid #e1e4ec;box-sizing:border-box;background:#fff"></div>
<div class="r" style="left:1957.0px;top:1086.0px;width:931.0px;height:2.0px;background:#e1e4ec"></div>
<div class="t" style="left:1974.5px;top:1030.5px;font-size:26.8px;color:#1c2b34;">Instances with Most Live Rows</div>
<svg class="r" style="left:2825px;top:1026px" width="32" height="32" viewBox="0 0 32 32"><circle cx="16" cy="16" r="14" fill="#0068c6"/><path d="M10.6 11.3C11.6 8.8 13.6 7.6 16 7.6C19 7.6 21.4 9.5 21.4 12.2C21.4 14.6 19.4 15.6 18.2 16.6C17.4 17.3 17.2 17.9 17.2 19.2H14.6C14.6 17.3 15 16.3 16.4 15.1C17.6 14.1 18.4 13.6 18.4 12.4C18.4 11.1 17.4 10.3 16 10.3C14.8 10.3 13.9 11 13.2 12.5Z" fill="#fff"/><rect x="14.4" y="20.9" width="3.1" height="4.3" fill="#fff"/></svg>
<div class="r" style="left:2123.0px;top:1094.0px;width:753.0px;height:46.0px;background:#bedcfb"></div>
<div class="t" style="left:1957px;width:148.6px;text-align:right;top:1105.2px;font-size:26px;font-weight:700;color:#1c2b34">5.00M</div>
<div class="t" style="left:2138.0px;top:1104.2px;font-size:27.4px;color:#0b141b;white-space:nowrap">customers, user-db-prod-eks-shopist-a-us-east-1, public</div>
<div class="r" style="left:2123.0px;top:1142.0px;width:753.0px;height:46.0px;background:#bedcfb"></div>
<div class="t" style="left:1957px;width:148.6px;text-align:right;top:1153.2px;font-size:26px;font-weight:700;color:#1c2b34">5.00M</div>
<div class="t" style="left:2138.0px;top:1152.2px;font-size:27.4px;color:#0b141b;white-space:nowrap">customers, user-db-prod-gke-dpn-a-us-central1, public</div>
<div class="r" style="left:2123.0px;top:1190.0px;width:753.0px;height:46.0px;background:#bedcfb"></div>
<div class="t" style="left:1957px;width:148.6px;text-align:right;top:1201.2px;font-size:26px;font-weight:700;color:#1c2b34">5.00M</div>
<div class="t" style="left:2138.0px;top:1200.2px;font-size:27.4px;color:#0b141b;white-space:nowrap">customers, user-db-prod-aks...opist-a-northcentralus, public</div>
<div class="r" style="left:2123.0px;top:1238.0px;width:753.0px;height:46.0px;background:#bedcfb"></div>
<div class="t" style="left:1957px;width:148.6px;text-align:right;top:1249.2px;font-size:26px;font-weight:700;color:#1c2b34">5.00M</div>
<div class="t" style="left:2138.0px;top:1248.2px;font-size:27.4px;color:#0b141b;white-space:nowrap">customers, user-db-prod-gke-shopist-a-us-central1, public</div>
<div class="r" style="left:2123.0px;top:1286.0px;width:753.0px;height:46.0px;background:#bedcfb"></div>
<div class="t" style="left:1957px;width:148.6px;text-align:right;top:1297.2px;font-size:26px;font-weight:700;color:#1c2b34">5.00M</div>
<div class="t" style="left:2138.0px;top:1296.2px;font-size:27.4px;color:#0b141b;white-space:nowrap">customers, user-db-staging-g...-shopist-a-us-central1, public</div>
<div class="r" style="left:2123.0px;top:1334.0px;width:753.0px;height:46.0px;background:#bedcfb"></div>
<div class="t" style="left:1957px;width:148.6px;text-align:right;top:1345.2px;font-size:26px;font-weight:700;color:#1c2b34">5.00M</div>
<div class="t" style="left:2138.0px;top:1344.2px;font-size:27.4px;color:#0b141b;white-space:nowrap">customers, user-db-dev-eks-shopist-a-us-east-1, public</div>
<div class="r" style="left:2123.0px;top:1382.0px;width:753.0px;height:46.0px;background:#bedcfb"></div>
<div class="t" style="left:1957px;width:148.6px;text-align:right;top:1393.2px;font-size:26px;font-weight:700;color:#1c2b34">5.00M</div>
<div class="t" style="left:2138.0px;top:1392.2px;font-size:27.4px;color:#0b141b;white-space:nowrap">customers, user-db-prod-gke-shopist-a-us-west1, public</div>
<div class="r" style="left:2123.0px;top:1430.0px;width:753.0px;height:46.0px;background:#bedcfb"></div>
<div class="t" style="left:1957px;width:148.6px;text-align:right;top:1441.2px;font-size:26px;font-weight:700;color:#1c2b34">5.00M</div>
<div class="t" style="left:2138.0px;top:1440.2px;font-size:27.4px;color:#0b141b;white-space:nowrap">customers, user-db-prod-eks-shopist-a-us-west-2, public</div>
<div class="t" style="left:1986.5px;top:1286.8px;font-size:21.6px;color:#9aa2a9;transform:translate(-50%,-50%) rotate(-90deg);white-space:nowrap;line-height:1">Rows</div>
</body></html>
